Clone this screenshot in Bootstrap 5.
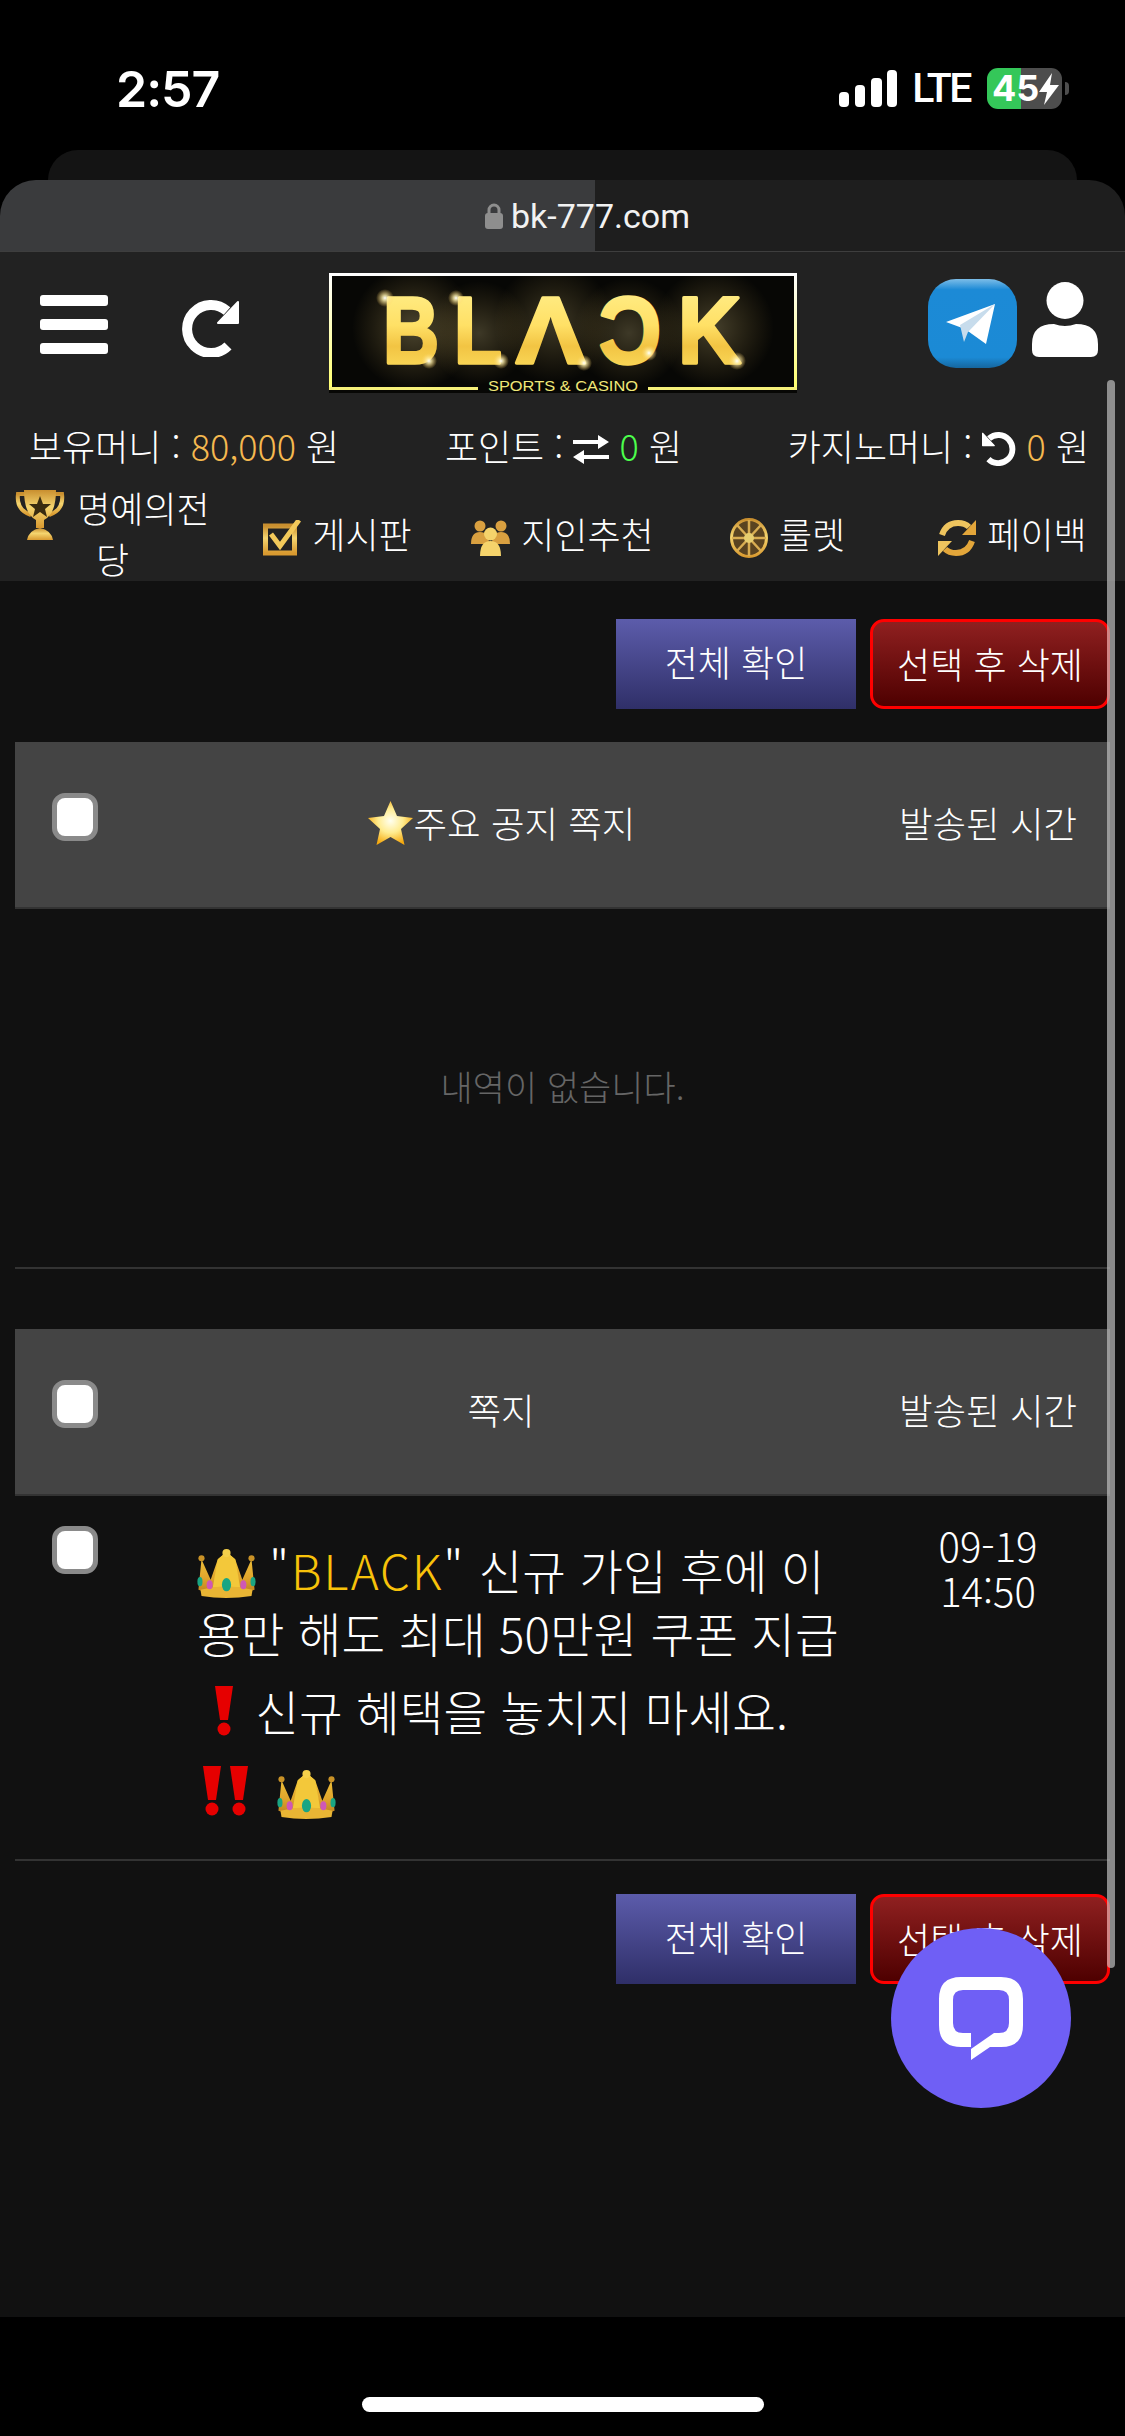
<!DOCTYPE html>
<html lang="ko">
<head>
  <meta charset="UTF-8">
  <meta name="viewport" content="width=device-width, initial-scale=1">
  <title>BLACK - 쪽지</title>
  <link href="https://cdn.jsdelivr.net/npm/bootstrap@5.3.0/dist/css/bootstrap.min.css" rel="stylesheet">
  <style>
    html, body { background: #000; overflow: hidden; }
    body { font-family: "Noto Sans CJK KR", "Noto Sans", sans-serif; font-weight: 300; color: #fff; }
    .screen { width: 1125px; height: 2436px; }
    .svg-defs { display: block; width: 0; height: 0; }

    /* ios status bar */
    .status-bar { height: 150px; padding: 68px 56px 0 116px; font-family: Inter, "Liberation Sans", sans-serif; }
    .clock { font-size: 50px; font-weight: 600; line-height: 42px; letter-spacing: -1px; }
    .net { font-family: Roboto, "Liberation Sans", sans-serif; font-size: 41px; font-weight: 500; line-height: 41px; letter-spacing: -2.5px; margin: 0 17px 0 15px; }
    .batt { width: 75px; height: 41px; border-radius: 11px; font-size: 36px; font-weight: 700; line-height: 41px; padding-left: 5px;
      background: linear-gradient(90deg, #34c759 34px, #4d4d4d 34px); }
    .batt-nub { width: 4px; height: 13px; margin-left: 3px; background: #4d4d4d; border-radius: 0 4px 4px 0; }

    /* browser tabs */
    .tab-back { height: 30px; margin: 0 48px; background: #141414; border-radius: 30px 30px 0 0; }
    .tab-front { height: 72px; border-bottom: 1px solid #3e3e3e; border-radius: 36px 36px 0 0;
      background: linear-gradient(90deg, #3a3b3d 595px, #1e1e1e 595px); padding: 0 0 0 50px; }
    .url-text { font-family: Roboto, "Liberation Sans", sans-serif; font-weight: 400; font-size: 34px; line-height: 40px; margin-left: 8px; color: #f2f2f2; }

    /* site header */
    .site-head { background: #222; height: 329px; }
    .head-top { padding: 21px 27px 0 40px; height: 165px; }
    .burger { width: 68px; margin-top: 22px; }
    .burger i { display: block; height: 11px; background: #fff; border-radius: 3px; margin-bottom: 13px; }
    .burger i:last-child { margin-bottom: 0; }
    .reload-btn { margin: 26px 0 0 73px; }
    .logo-box { margin-left: 90px; }
    .tele-btn { margin: 6px 0 0 131px; }
    .user-btn { margin: 9px 0 0 15px; }
    .money-row { height: 60px; padding: 0 36px 0 29px; font-size: 36px; line-height: 56px; }
    .gold-txt { color: #f5b950; }
    .green-txt { color: #4cff4c; }
    .swap-ico { vertical-align: -3px; }
    .undo-ico { vertical-align: -5px; transform: scaleX(-1); }
    .menu-row { height: 104px; padding-top: 5px; }
    .menu-cell { font-size: 36px; line-height: 51px; text-align: center; padding: 0 15px; }
    .menu-ico { vertical-align: -7px; margin-right: 11px; }
    .menu-ico-tall { vertical-align: -9px; }
    .trophy-ico { vertical-align: -5px; margin: -20px 12px -12px 0; }

    /* content */
    .page-main { background: #111; height: 1736px; padding: 38px 15px 0; }
    .btn-row { gap: 14px; margin-bottom: 33px; }
    .act-btn { width: 240px; height: 90px; font-size: 36px; font-weight: 300; color: #fff; padding: 0; }
    .act-blue { background: linear-gradient(#5c5cab, #2f2f68); border: 0; padding-bottom: 6px; }
    .act-blue:hover { background: linear-gradient(#5c5cab, #2f2f68); color: #fff; }
    .act-red { background: linear-gradient(#8f2020, #4e0000); border: 3px solid #f00; border-radius: 14px; padding-bottom: 3px; }
    .act-red:hover { background: linear-gradient(#8f2020, #4e0000); color: #fff; border-color: #f00; }
    .tbl-head { height: 167px; background: #444; border-bottom: 2px solid #333; font-size: 36.500px; line-height: 50px; }
    .cell-chk { width: 151px; flex: none; padding: 51px 0 0 37px; }
    .cell-body { flex: 1; min-width: 0; }
    .cell-time { width: 244px; flex: none; text-align: center; }
    .head-label { padding-bottom: 4px; }
    .head-title { padding-right: 30px; text-align: center; }
    .chk-box.form-check-input { width: 46px; height: 48px; margin: 0; background-color: #fff; border: 5px solid #8a8a8a; border-radius: 13px; display: block; }
    .empty-msg { height: 360px; border-bottom: 2px solid #333; font-size: 35px; color: #666; margin-bottom: 60px; padding-bottom: 3px; }
    .msg-row { height: 365px; border-bottom: 2px solid #333; margin-bottom: 33px; }
    .msg-row .cell-chk { padding-top: 30px; }
    .msg-txt { padding: 42px 20px 0 31px; font-size: 47.500px; line-height: 63px; word-break: break-all; }
    .msg-txt p { margin: 0 0 15px; }
    .msg-txt p:nth-child(2) { margin-bottom: 17px; }
    .msg-quote { letter-spacing: 2px; }
    .msg-brand { color: #f8c20a; }
    .msg-time { font-size: 40px; line-height: 45px; padding-top: 27px; }
    .crown-ico { vertical-align: -8px; margin-top: -8px; }
    .crown-last { margin-left: 13px; }
    .excl-ico { vertical-align: -5px; margin-top: -8px; }
    .excl-lead { margin-left: 15px; margin-right: 6px; }
    .excl-pair { margin-left: 3px; margin-right: 3px; }

    /* bottom */
    .home-area { height: 119px; padding-top: 80px; }
    .home-bar { width: 402px; height: 15px; margin: 0 auto; background: #fff; border-radius: 8px; }

    /* overlays */
    .scroll-thumb { position: absolute; left: 1107px; top: 380px; width: 8px; height: 1588px; background: rgba(190,190,190,.7); border-radius: 4px; }
    .chat-fab { position: absolute; left: 891px; top: 1928px; width: 180px; height: 180px; background: #6f5ff5; border-radius: 50%; }
  </style>
</head>
<body>

<!-- shared gradients and small icons -->
<svg class="svg-defs" aria-hidden="true">
  <defs>
    <linearGradient id="goldV" x1="0" y1="0" x2="0" y2="1">
      <stop offset="0" stop-color="#c98f2f"/><stop offset=".45" stop-color="#f5d56f"/><stop offset="1" stop-color="#d99a30"/>
    </linearGradient>
    <linearGradient id="goldLogo" x1="0" y1="0" x2="0" y2="1">
      <stop offset="0" stop-color="#fff190"/><stop offset=".45" stop-color="#ffe066"/><stop offset=".65" stop-color="#f2c443"/><stop offset="1" stop-color="#ffe566"/>
    </linearGradient>
    <linearGradient id="frameLine" x1="0" y1="0" x2="0" y2="1">
      <stop offset="0" stop-color="#fff"/><stop offset="1" stop-color="#ffff70"/>
    </linearGradient>
    <linearGradient id="topGlow" x1="0" y1="0" x2="1" y2="0">
      <stop offset="0" stop-color="#c9a84a" stop-opacity="0"/><stop offset=".5" stop-color="#e2c765"/><stop offset="1" stop-color="#c9a84a" stop-opacity="0"/>
    </linearGradient>
    <linearGradient id="crownG" x1="0" y1="0" x2="0" y2="1">
      <stop offset="0" stop-color="#f4c93c"/><stop offset=".6" stop-color="#e0a52c"/><stop offset="1" stop-color="#b87d1c"/>
    </linearGradient>
    <radialGradient id="starG" cx=".5" cy=".45" r=".55">
      <stop offset="0" stop-color="#fffff0"/><stop offset=".5" stop-color="#ffec90"/><stop offset="1" stop-color="#f5a90f"/>
    </radialGradient>
    <radialGradient id="glowG">
      <stop offset="0" stop-color="#ffe9a0" stop-opacity=".55"/><stop offset="1" stop-color="#ffd060" stop-opacity="0"/>
    </radialGradient>
    <radialGradient id="sparkG">
      <stop offset="0" stop-color="#fff"/><stop offset=".3" stop-color="#fff2b0" stop-opacity=".8"/><stop offset="1" stop-color="#ffd060" stop-opacity="0"/>
    </radialGradient>
    <linearGradient id="teleG" x1="0" y1="0" x2="0" y2="1">
      <stop offset="0" stop-color="#7cbde8"/><stop offset=".12" stop-color="#1c8ad6"/><stop offset=".88" stop-color="#1b8ad5"/><stop offset="1" stop-color="#16669e"/>
    </linearGradient>
    <symbol id="ico-reload" viewBox="0 0 58 58">
      <path d="M47 47A24 24 0 1 1 46 12" fill="none" stroke="#fff" stroke-width="10"/>
      <path d="M57 3V24H37Z" fill="#fff" stroke="#fff" stroke-width="2" stroke-linejoin="round"/>
    </symbol>
    <symbol id="ico-crown" viewBox="0 0 57 48">
      <path d="M4 10L13 30 20 10 28.500 3 37 10 44 30 53 10 56 40Q28 50 1 40Z" fill="url(#crownG)"/>
      <path d="M20 10L28.500 3 37 10 42 38H15Z" fill="#f3c83a"/>
      <path d="M3 40Q28 33 54 40L53 46Q28 50 4 46Z" fill="#e9b534"/>
      <circle cx="4" cy="9" r="3" fill="#c99227"/><circle cx="53" cy="9" r="3" fill="#c99227"/><circle cx="28.500" cy="4" r="4" fill="#f5d04a"/>
      <ellipse cx="28.500" cy="35" rx="4.500" ry="6.500" fill="#1aa583"/>
      <ellipse cx="12" cy="35" rx="3" ry="4.500" fill="#cf58b5"/><ellipse cx="45" cy="35" rx="3" ry="4.500" fill="#cf58b5"/>
      <ellipse cx="2.500" cy="32" rx="2.500" ry="4.500" fill="#1aa583"/><ellipse cx="54.500" cy="32" rx="2.500" ry="4.500" fill="#1aa583"/>
    </symbol>
    <symbol id="ico-excl" viewBox="0 0 24 50">
      <path d="M3 0H21L16 34H8Z" fill="#e60000"/><circle cx="12" cy="43" r="6.500" fill="#e60000"/>
    </symbol>
  </defs>
</svg>

<div class="screen position-relative">

  <!-- status bar -->
  <div class="status-bar d-flex justify-content-between align-items-start">
    <span class="clock">2:57</span>
    <div class="d-flex align-items-center">
      <svg width="58" height="37" viewBox="0 0 58 37"><rect x="0" y="22" width="10" height="15" rx="4" fill="#fff"/><rect x="16" y="15" width="10" height="22" rx="4" fill="#fff"/><rect x="32" y="8" width="11" height="29" rx="4" fill="#fff"/><rect x="48" y="0" width="10" height="37" rx="4" fill="#fff"/></svg>
      <span class="net">LTE</span>
      <div class="batt d-flex align-items-center">45<svg width="20" height="32" viewBox="0 0 20 32"><path d="M13 0L0 19H8L5 32 20 12H11Z" fill="#fff"/></svg></div>
      <div class="batt-nub"></div>
    </div>
  </div>

  <!-- safari tabs -->
  <div class="tab-back"></div>
  <div class="tab-front d-flex justify-content-center align-items-center">
    <svg width="18" height="26" viewBox="0 0 18 26"><path d="M4 11V7a5 5 0 0 1 10 0v4" fill="none" stroke="#8e8e8e" stroke-width="3"/><rect y="10" width="18" height="16" rx="3" fill="#8e8e8e"/></svg>
    <span class="url-text">bk-777.com</span>
  </div>

  <!-- site header -->
  <div class="site-head">
    <div class="head-top d-flex align-items-start">
      <div class="burger"><i></i><i></i><i></i></div>
      <svg class="reload-btn" width="58" height="58"><use href="#ico-reload"/></svg>
      <div class="logo-box">
        <svg width="468" height="120" viewBox="0 0 468 120" class="d-block">
          <rect width="468" height="120" fill="#070705"/>
          <circle cx="85" cy="55" r="62" fill="url(#glowG)" opacity=".5"/><circle cx="150" cy="60" r="52" fill="url(#glowG)" opacity=".4"/>
          <circle cx="225" cy="50" r="60" fill="url(#glowG)" opacity=".4"/><circle cx="300" cy="60" r="55" fill="url(#glowG)" opacity=".4"/>
          <circle cx="385" cy="55" r="60" fill="url(#glowG)" opacity=".45"/>
          <path d="M1.500 114V1.500H466.500V114" fill="none" stroke="url(#frameLine)" stroke-width="3"/>
          <path d="M80 4.500H390" stroke="url(#topGlow)" stroke-width="2"/>
          <path d="M0 115.500H149M319 115.500H468" stroke="#f6f07a" stroke-width="3"/>
          <g font-family="'Liberation Sans', sans-serif" font-weight="700" font-size="94" fill="url(#goldLogo)" stroke="url(#goldLogo)" stroke-width="3.500" stroke-linejoin="round">
            <text x="54" y="90" textLength="56" lengthAdjust="spacingAndGlyphs">B</text>
            <text x="125" y="90" textLength="48" lengthAdjust="spacingAndGlyphs">L</text>
            <text x="187" y="90" textLength="69" lengthAdjust="spacingAndGlyphs">Λ</text>
            <text transform="translate(332 0) scale(-1 1)" x="0" y="90" textLength="62" lengthAdjust="spacingAndGlyphs">C</text>
            <text x="349" y="90" textLength="63" lengthAdjust="spacingAndGlyphs">K</text>
          </g>
          <text x="159" y="118" textLength="150" lengthAdjust="spacingAndGlyphs" font-family="'Liberation Sans', sans-serif" font-size="14" fill="#f0e878">SPORTS &amp; CASINO</text>
          <circle cx="56" cy="25" r="9" fill="url(#sparkG)"/><circle cx="127" cy="25" r="8" fill="url(#sparkG)"/><circle cx="100" cy="88" r="8" fill="url(#sparkG)"/>
          <circle cx="172" cy="88" r="8" fill="url(#sparkG)"/><circle cx="255" cy="90" r="8" fill="url(#sparkG)"/><circle cx="320" cy="80" r="8" fill="url(#sparkG)"/>
          <circle cx="408" cy="88" r="9" fill="url(#sparkG)"/>
        </svg>
      </div>
      <svg class="tele-btn" width="89" height="89" viewBox="0 0 89 89">
        <rect width="89" height="89" rx="28" fill="url(#teleG)"/>
        <path d="M18 43L67 25 58 65 37 50Z" fill="#fff"/>
        <path d="M67 25L32 46 36 63 40 53Z" fill="#c7dcec"/>
      </svg>
      <svg class="user-btn" width="66" height="75" viewBox="0 0 66 75">
        <circle cx="33" cy="18.500" r="18.500" fill="#fff"/>
        <path d="M0 68V62Q0 42 22 42Q33 46 44 42Q66 42 66 62V68Q66 75 59 75H7Q0 75 0 68Z" fill="#fff"/>
      </svg>
    </div>

    <div class="money-row d-flex justify-content-between">
      <span>보유머니 : <span class="gold-txt">80,000</span> 원</span>
      <span>포인트 :
        <svg class="swap-ico" width="36" height="29" viewBox="0 0 36 29"><path d="M0 5H25V0L36 7 25 14V9H0ZM36 20H11V15L0 22 11 29V24H36Z" fill="#fff"/></svg>
        <span class="green-txt">0</span> 원</span>
      <span>카지노머니 :
        <svg class="undo-ico" width="34" height="35"><use href="#ico-reload"/></svg>
        <span class="gold-txt">0</span> 원</span>
    </div>

    <div class="menu-row row g-0 align-items-center">
      <div class="col menu-cell">
        <svg class="trophy-ico" width="50" height="50" viewBox="0 0 50 50">
          <path d="M10 4H3Q1 20 16 25M40 4H47Q49 20 34 25" fill="none" stroke="url(#goldV)" stroke-width="4"/>
          <path d="M9 0H41Q41 24 29 30V38H21V30Q9 24 9 0Z" fill="url(#goldV)"/>
          <path d="M12 50Q14 40 25 38Q36 40 38 50Z" fill="url(#goldV)"/>
          <path d="M25 6L28 14 36 14 30 19 32 27 25 22 18 27 20 19 14 14 22 14Z" fill="#3a2c10"/>
        </svg>명예의전당
      </div>
      <div class="col menu-cell">
        <svg class="menu-ico" width="38" height="36" viewBox="0 0 38 36">
          <rect x="2.500" y="6" width="29" height="27" fill="none" stroke="url(#goldV)" stroke-width="5"/>
          <path d="M8 14L17 26 36 0" fill="none" stroke="#f2c95a" stroke-width="5"/>
        </svg>게시판
      </div>
      <div class="col menu-cell">
        <svg class="menu-ico" width="39" height="36" viewBox="0 0 39 36">
          <circle cx="9" cy="6" r="5.500" fill="#d9a040"/><path d="M0 24Q0 12 9 12Q18 12 18 24Z" fill="#d9a040"/>
          <circle cx="30" cy="6" r="5.500" fill="#d9a040"/><path d="M21 24Q21 12 30 12Q39 12 39 24Z" fill="#d9a040"/>
          <circle cx="19.500" cy="14" r="6.500" fill="#f5d36b"/><path d="M9 36Q9 21 19.500 21Q30 21 30 36Z" fill="#f5d36b"/>
        </svg>지인추천
      </div>
      <div class="col menu-cell">
        <svg class="menu-ico menu-ico-tall" width="38" height="40" viewBox="0 0 38 40">
          <ellipse cx="19" cy="20" rx="17.500" ry="18.500" fill="#5a4320" stroke="url(#goldV)" stroke-width="3"/>
          <path d="M19 2V38M2 20H36M7 7L31 33M31 7L7 33" stroke="#d9ad52" stroke-width="2.500"/>
          <circle cx="19" cy="20" r="5" fill="#e6cd6f"/>
        </svg>룰렛
      </div>
      <div class="col menu-cell">
        <svg class="menu-ico menu-ico-tall" width="38" height="40" viewBox="0 0 38 40">
          <path d="M4 17Q8 5 20 5Q27 5 31 9" fill="none" stroke="#eec45e" stroke-width="6"/>
          <path d="M38 2V17H24Z" fill="#e3a63a"/>
          <path d="M34 23Q30 35 18 35Q11 35 7 31" fill="none" stroke="#e3a63a" stroke-width="6"/>
          <path d="M0 38V23H14Z" fill="#eec45e"/>
        </svg>페이백
      </div>
    </div>
  </div>

  <!-- content -->
  <div class="page-main">
    <div class="btn-row d-flex justify-content-end">
      <button type="button" class="btn rounded-0 act-btn act-blue">전체 확인</button>
      <button type="button" class="btn act-btn act-red">선택 후 삭제</button>
    </div>

    <div class="tbl-head d-flex">
      <div class="cell-chk"><input class="form-check-input chk-box" type="checkbox"></div>
      <div class="cell-body head-title head-label d-flex justify-content-center align-items-center">
        <svg width="47" height="44" viewBox="0 0 47 44" class="flex-shrink-0"><path d="M23.500 0L30 15 46 17 34 28 37.500 44 23.500 36 9.500 44 13 28 1 17 17 15Z" fill="url(#starG)"/></svg>주요 공지 쪽지
      </div>
      <div class="cell-time head-label d-flex justify-content-center align-items-center">발송된 시간</div>
    </div>

    <div class="empty-msg d-flex justify-content-center align-items-center">내역이 없습니다.</div>

    <div class="tbl-head d-flex">
      <div class="cell-chk"><input class="form-check-input chk-box" type="checkbox"></div>
      <div class="cell-body head-title head-label d-flex justify-content-center align-items-center">쪽지</div>
      <div class="cell-time head-label d-flex justify-content-center align-items-center">발송된 시간</div>
    </div>

    <div class="msg-row d-flex">
      <div class="cell-chk"><input class="form-check-input chk-box" type="checkbox"></div>
      <div class="cell-body msg-txt">
        <p><svg class="crown-ico" width="59" height="49"><use href="#ico-crown"/></svg> <span class="msg-quote">"<span class="msg-brand">BLACK</span>"</span> 신규 가입 후에 이용만 해도 최대 50만원 쿠폰 지급</p>
        <p><svg class="excl-ico excl-lead" width="24" height="50"><use href="#ico-excl"/></svg> 신규 혜택을 놓치지 마세요.</p>
        <p><svg class="excl-ico excl-pair" width="24" height="50"><use href="#ico-excl"/></svg><svg class="excl-ico" width="24" height="50"><use href="#ico-excl"/></svg> <svg class="crown-ico crown-last" width="59" height="49"><use href="#ico-crown"/></svg></p>
      </div>
      <div class="cell-time msg-time">09-19<br>14:50</div>
    </div>

    <div class="btn-row d-flex justify-content-end">
      <button type="button" class="btn rounded-0 act-btn act-blue">전체 확인</button>
      <button type="button" class="btn act-btn act-red">선택 후 삭제</button>
    </div>
  </div>

  <div class="home-area"><div class="home-bar"></div></div>

  <!-- overlays -->
  <div class="scroll-thumb"></div>
  <div class="chat-fab d-flex justify-content-center align-items-center">
    <svg width="84" height="83" viewBox="0 0 84 83">
      <path fill-rule="evenodd" fill="#fff" d="M22 0H62Q84 0 84 22V48Q84 70 62 70H51L32 83V70H22Q0 70 0 48V22Q0 0 22 0ZM24 13Q14 13 14 23V46Q14 56 24 56H32V72L55 56H60Q70 56 70 46V23Q70 13 60 13Z"/>
    </svg>
  </div>
</div>

<script src="https://cdn.jsdelivr.net/npm/bootstrap@5.3.0/dist/js/bootstrap.bundle.min.js"></script>
</body>
</html>
